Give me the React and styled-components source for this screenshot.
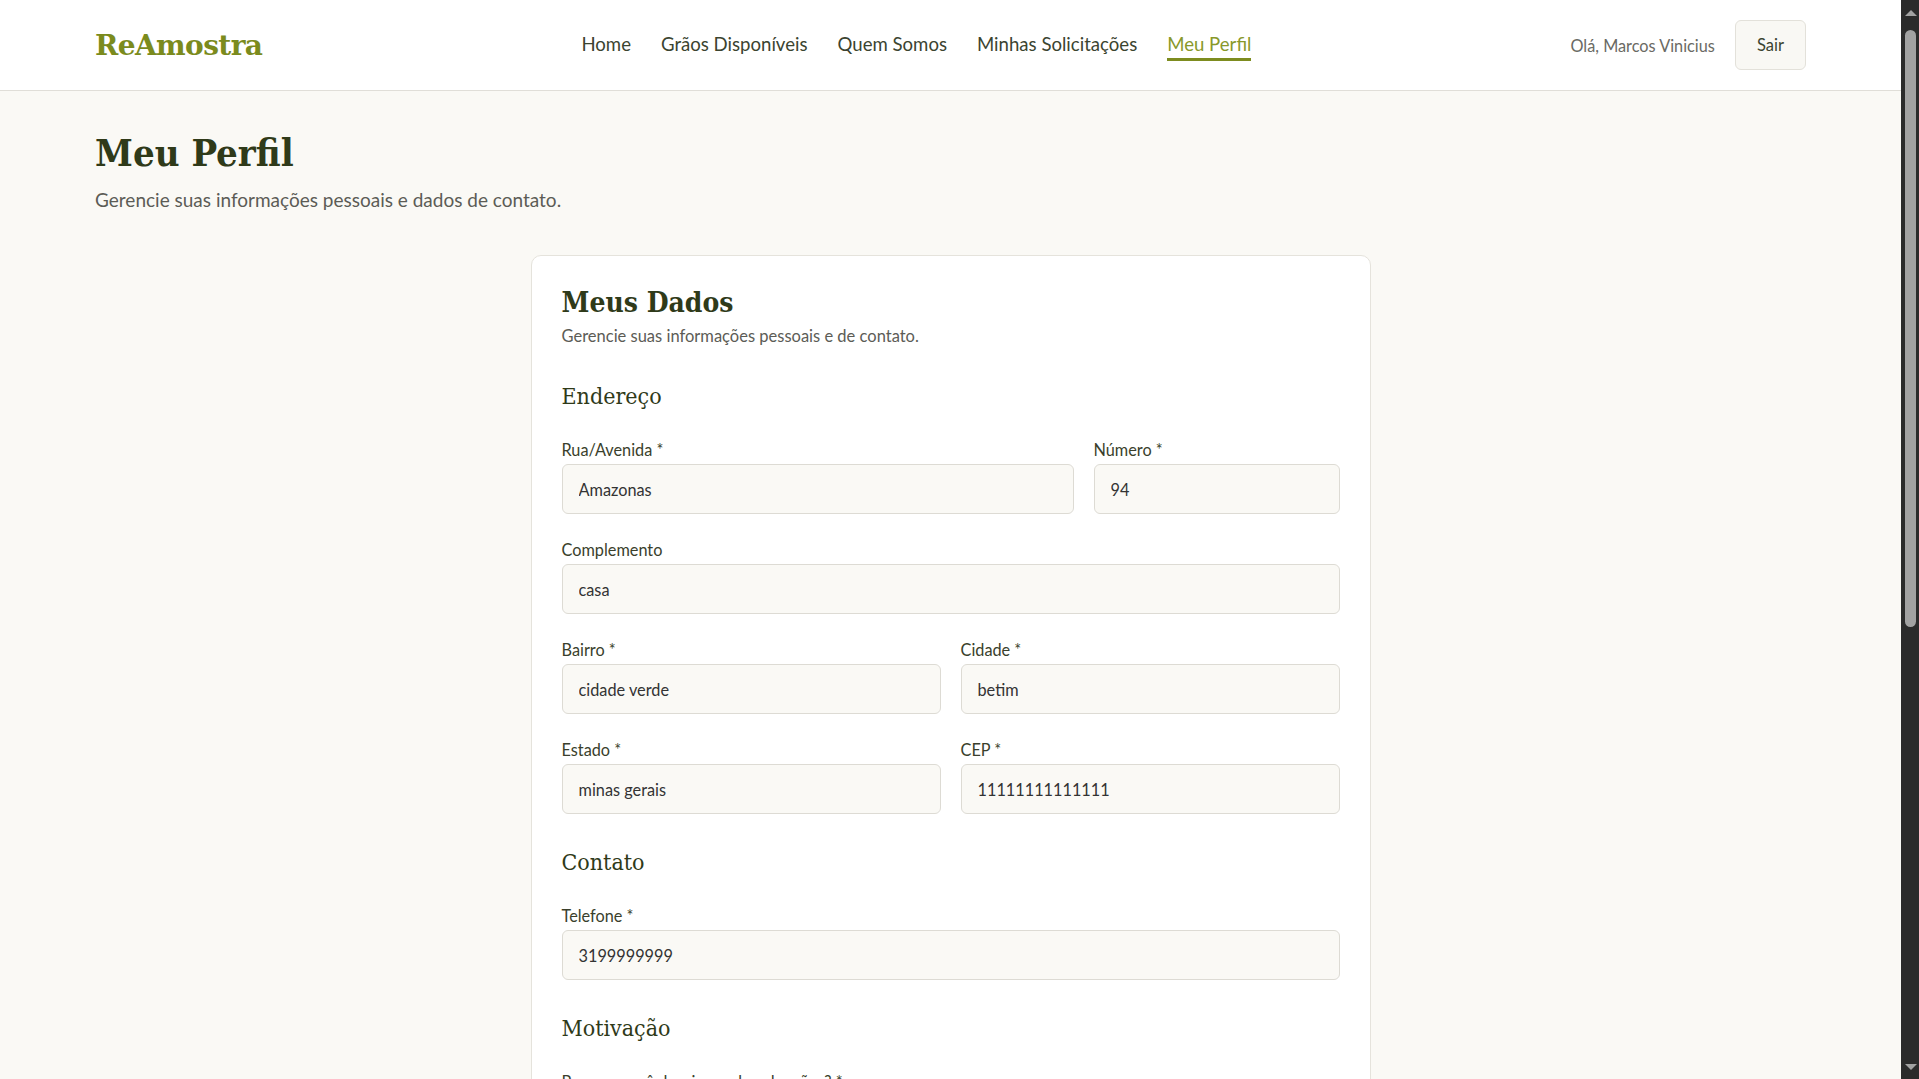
import React from 'react';
import styled, { createGlobalStyle } from 'styled-components';

const GlobalStyle = createGlobalStyle`
  * { box-sizing: border-box; }
  html, body { margin: 0; padding: 0; height: 100%; overflow: hidden; }
  body {
    background: #faf9f5;
    font-family: Lato, "Noto Sans", sans-serif;
    color: #333;
  }
`;

const serif = `"DejaVu Serif Condensed", "DejaVu Serif", "Liberation Serif", serif`;

const Shell = styled.div`
  display: flex;
  height: 100vh;
`;

const Viewport = styled.div`
  flex: 1;
  min-width: 0;
  overflow-y: auto;
  scrollbar-width: none;
  &::-webkit-scrollbar { display: none; }
`;

const Rail = styled.div`
  width: 18px;
  flex-shrink: 0;
  background: #2b2b2b;
  display: flex;
  flex-direction: column;
`;

const RailButton = styled.div`
  height: 26px;
  display: flex;
  justify-content: center;
  align-items: ${p => (p.$down ? 'flex-end' : 'flex-start')};
  padding: ${p => (p.$down ? '0 0 9px 1px' : '10px 0 0 1px')};
  margin-top: ${p => (p.$down ? 'auto' : '0')};
`;

const Arrow = styled.span`
  width: 0;
  height: 0;
  border-left: 6px solid transparent;
  border-right: 6px solid transparent;
  ${p => (p.$down ? 'border-top: 6px solid #a2a2a2;' : 'border-bottom: 6px solid #a2a2a2;')}
`;

const Thumb = styled.div`
  height: 597px;
  margin: 4px 3px 0 4px;
  background: #a2a2a2;
  border-radius: 6px;
`;

const Header = styled.header`
  height: 91px;
  background: #ffffff;
  border-bottom: 1px solid #e0ded8;
  padding: 0 5%;
  display: flex;
  align-items: center;
  justify-content: space-between;
`;

const Logo = styled.a`
  font-family: "DejaVu Serif", "Liberation Serif", serif;
  font-weight: 700;
  font-size: 28px;
  line-height: 1.2;
  color: #7b8b1d;
  text-decoration: none;
  letter-spacing: -0.6px;
  padding-top: 1px;
`;

const Nav = styled.nav`
  display: flex;
  align-items: center;
  gap: 30px;
`;

const NavLink = styled.a`
  font-size: 18.6px;
  line-height: 27px;
  padding-top: 2px;
  color: ${p => (p.$active ? '#88982a' : '#3b4430')};
  border-bottom: 3px solid ${p => (p.$active ? '#7d8c1f' : 'transparent')};
  text-decoration: none;
`;

const UserArea = styled.div`
  display: flex;
  align-items: center;
  gap: 20px;
`;

const Greeting = styled.span`
  font-size: 16.3px;
  color: #6a6a64;
`;

const LogoutButton = styled.button`
  height: 50px;
  padding: 0 21px;
  background: #f9f8f4;
  border: 1px solid #e3e1da;
  border-radius: 6px;
  font-family: inherit;
  font-size: 16.5px;
  color: #3b4430;
`;

const Main = styled.main`
  padding: 38px 5% 220px;
`;

const PageTitle = styled.h1`
  margin: 0;
  font-family: ${serif};
  font-weight: 700;
  font-size: 38px;
  line-height: 48px;
  color: #2f3a19;
`;

const PageSubtitle = styled.p`
  margin: 9px 0 0;
  font-size: 19px;
  line-height: 28px;
  color: #5c5c56;
`;

const Card = styled.section`
  max-width: 840px;
  margin: 41px auto 0;
  background: #ffffff;
  border: 1px solid #e5e3dc;
  border-radius: 10px;
  padding: 30px;
`;

const CardTitle = styled.h2`
  margin: 0;
  font-family: ${serif};
  font-weight: 700;
  font-size: 28px;
  line-height: 34px;
  color: #2f3a19;
`;

const CardSubtitle = styled.p`
  margin: 4px 0 0;
  font-size: 16.5px;
  line-height: 24px;
  color: #5c5c56;
`;

const Section = styled.div`
  margin-top: 34px;
  display: flex;
  flex-direction: column;
  gap: 24px;
`;

const SectionTitle = styled.h3`
  margin: 0 0 3px;
  font-family: ${serif};
  font-weight: 400;
  font-size: 23px;
  line-height: 29px;
  color: #2f3a19;
`;

const Row = styled.div`
  display: grid;
  grid-template-columns: ${p => p.$cols || '1fr'};
  gap: 20px;
`;

const Field = styled.div`
  display: flex;
  flex-direction: column;
  gap: 2px;
`;

const Label = styled.label`
  font-size: 16.3px;
  line-height: 24px;
  color: #3a3f2c;
`;

const Input = styled.input`
  height: 50px;
  width: 100%;
  padding: 0 16px;
  background: #faf9f5;
  border: 1px solid #dddbd4;
  border-radius: 6px;
  font-family: inherit;
  font-size: 16.3px;
  color: #333;
  outline: none;
`;

const TextArea = styled.textarea`
  width: 100%;
  min-height: 130px;
  padding: 12px 16px;
  background: #faf9f5;
  border: 1px solid #dddbd4;
  border-radius: 6px;
  font-family: inherit;
  font-size: 16.3px;
  color: #333;
  resize: vertical;
  outline: none;
`;

const Actions = styled.div`
  margin-top: 30px;
  display: flex;
  justify-content: flex-end;
`;

const SaveButton = styled.button`
  height: 48px;
  padding: 0 28px;
  background: #7d8c1f;
  color: #fff;
  border: none;
  border-radius: 6px;
  font-family: inherit;
  font-size: 16px;
`;

function TextField({ label, value }) {
  return (
    <Field>
      <Label>{label}</Label>
      <Input defaultValue={value} />
    </Field>
  );
}

export default function App() {
  return (
    <>
      <GlobalStyle />
      <Shell>
        <Viewport>
          <Header>
            <Logo href="#">ReAmostra</Logo>
            <Nav>
              <NavLink href="#">Home</NavLink>
              <NavLink href="#">Grãos Disponíveis</NavLink>
              <NavLink href="#">Quem Somos</NavLink>
              <NavLink href="#">Minhas Solicitações</NavLink>
              <NavLink href="#" $active>Meu Perfil</NavLink>
            </Nav>
            <UserArea>
              <Greeting>Olá, Marcos Vinicius</Greeting>
              <LogoutButton>Sair</LogoutButton>
            </UserArea>
          </Header>
          <Main>
            <PageTitle>Meu Perfil</PageTitle>
            <PageSubtitle>Gerencie suas informações pessoais e dados de contato.</PageSubtitle>
            <Card>
              <CardTitle>Meus Dados</CardTitle>
              <CardSubtitle>Gerencie suas informações pessoais e de contato.</CardSubtitle>

              <Section>
                <SectionTitle>Endereço</SectionTitle>
                <Row $cols="512fr 246fr">
                  <TextField label="Rua/Avenida *" value="Amazonas" />
                  <TextField label="Número *" value="94" />
                </Row>
                <TextField label="Complemento" value="casa" />
                <Row $cols="1fr 1fr">
                  <TextField label="Bairro *" value="cidade verde" />
                  <TextField label="Cidade *" value="betim" />
                </Row>
                <Row $cols="1fr 1fr">
                  <TextField label="Estado *" value="minas gerais" />
                  <TextField label="CEP *" value="11111111111111" />
                </Row>
              </Section>

              <Section>
                <SectionTitle>Contato</SectionTitle>
                <TextField label="Telefone *" value="3199999999" />
              </Section>

              <Section>
                <SectionTitle>Motivação</SectionTitle>
                <Field>
                  <Label>Por que você deseja receber doações? *</Label>
                  <TextArea defaultValue="Para pesquisa e cultivo." />
                </Field>
              </Section>

              <Actions>
                <SaveButton>Salvar Alterações</SaveButton>
              </Actions>
            </Card>
          </Main>
        </Viewport>
        <Rail>
          <RailButton><Arrow /></RailButton>
          <Thumb />
          <RailButton $down><Arrow $down /></RailButton>
        </Rail>
      </Shell>
    </>
  );
}
